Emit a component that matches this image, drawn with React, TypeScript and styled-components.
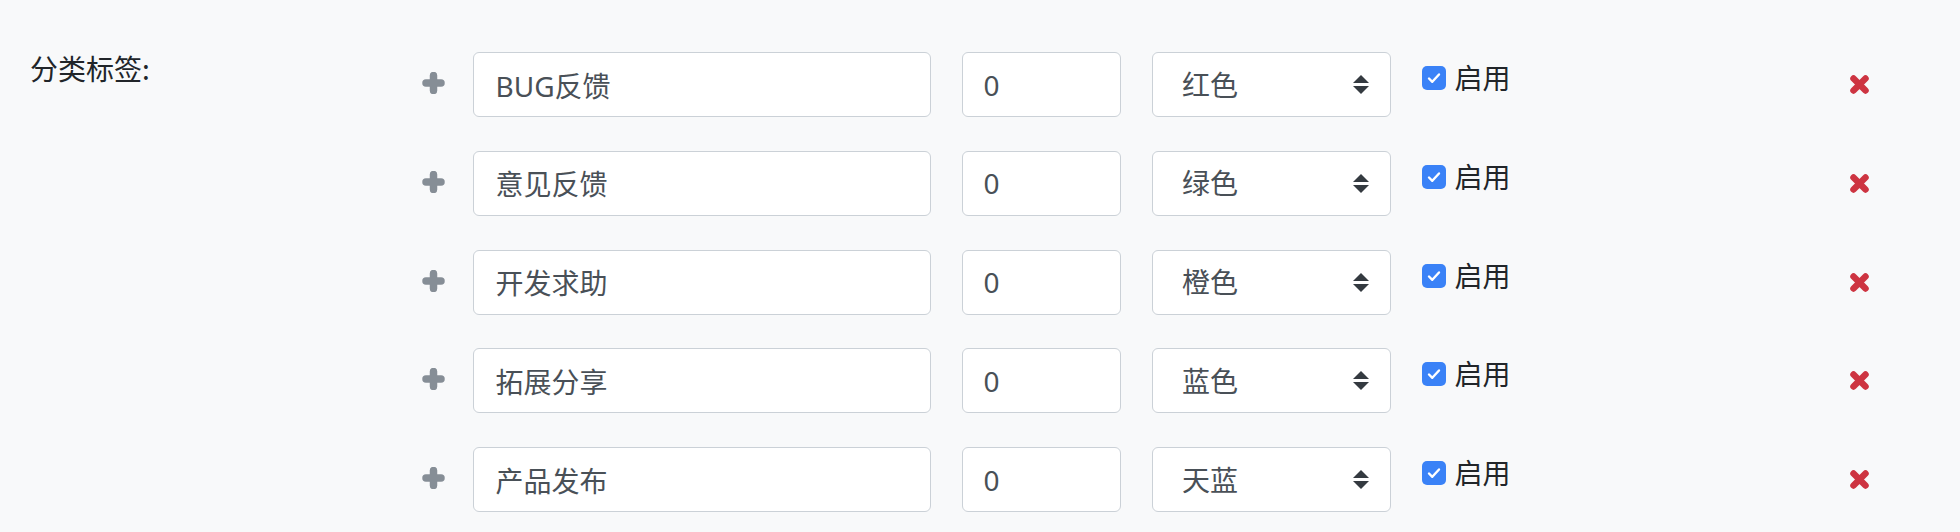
import React from "react";
import styled, { createGlobalStyle } from "styled-components";

const GlobalStyle = createGlobalStyle`
  html, body {
    margin: 0;
    padding: 0;
    background: #f8f9fa;
    font-family: "Noto Sans", "Noto Sans CJK SC", sans-serif;
  }
  * { box-sizing: border-box; }
`;

const Page = styled.div`
  width: 1960px;
  height: 532px;
  display: flex;
  padding: 52px 0 0 30px;
  background: #f8f9fa;
  overflow: hidden;
`;

const FieldLabel = styled.div`
  width: 392px;
  flex: none;
  font-size: 28px;
  line-height: 32px;
  color: #212529;
  font-family: "Noto Sans CJK SC", sans-serif;
`;

const Rows = styled.div`
  display: flex;
  flex-direction: column;
  gap: 33.75px;
  flex: 1;
`;

const Row = styled.div`
  display: flex;
  align-items: center;
  height: 65px;
`;

const AddButton = styled.button`
  width: 23px;
  height: 22px;
  padding: 0;
  border: 0;
  background: none;
  display: flex;
  flex: none;
  cursor: pointer;
  margin-top: -3px;
`;

const fieldBase = `
  height: 65px;
  flex: none;
  border: 1.6px solid #cbd1d7;
  border-radius: 6px;
  background: #fff;
  font-size: 28px;
  color: #495057;
  font-family: "Noto Sans", "Noto Sans CJK SC", sans-serif;
  outline: none;
`;

const NameInput = styled.input`
  ${fieldBase}
  width: 458px;
  margin-left: 27.5px;
  padding: 0 22px;
`;

const SortInput = styled.input`
  ${fieldBase}
  width: 159px;
  margin-left: 31px;
  padding: 0 21px;
`;

const SelectWrap = styled.div`
  position: relative;
  flex: none;
  width: 238.5px;
  height: 65px;
  margin-left: 31.5px;
`;

const ColorSelect = styled.select`
  ${fieldBase}
  width: 100%;
  padding: 0 50px 0 29px;
  appearance: none;
  -webkit-appearance: none;
`;

const SelectArrows = styled.svg`
  position: absolute;
  right: 22px;
  top: 23px;
  pointer-events: none;
`;

const EnableLabel = styled.label`
  display: flex;
  align-items: flex-start;
  gap: 9px;
  margin-left: 31px;
  align-self: flex-start;
  margin-top: 9px;
  font-size: 28px;
  line-height: 32px;
  color: #212529;
  font-family: "Noto Sans CJK SC", sans-serif;
  cursor: pointer;
`;

const CheckBox = styled.span<{ $checked: boolean }>`
  width: 24px;
  height: 24px;
  border-radius: 5px;
  background: ${(p) => (p.$checked ? "#3a82f7" : "#fff")};
  border: ${(p) => (p.$checked ? "none" : "1.5px solid #adb5bd")};
  display: flex;
  align-items: center;
  justify-content: center;
  flex: none;
  margin-top: 5px;
`;

const RemoveButton = styled.button`
  margin-left: auto;
  margin-right: 91px;
  width: 19px;
  height: 19px;
  padding: 0;
  border: 0;
  background: none;
  display: flex;
  flex: none;
  cursor: pointer;
`;

const tags = [
  { name: "BUG反馈", color: "红色" },
  { name: "意见反馈", color: "绿色" },
  { name: "开发求助", color: "橙色" },
  { name: "拓展分享", color: "蓝色" },
  { name: "产品发布", color: "天蓝" },
];

const colorOptions = ["红色", "绿色", "橙色", "蓝色", "天蓝"];

function PlusIcon() {
  return (
    <svg width="23" height="22" viewBox="0 0 23 22">
      <path d="M11.5 3.5v15M4 11h15" stroke="#868e96" strokeWidth="7.5" strokeLinecap="round" />
    </svg>
  );
}

function CrossIcon() {
  return (
    <svg width="19" height="19" viewBox="0 0 19 19">
      <path d="M3.5 3.5l12 12M15.5 3.5l-12 12" stroke="#cd3441" strokeWidth="6.5" strokeLinecap="round" />
    </svg>
  );
}

function Arrows() {
  return (
    <SelectArrows width="16" height="19" viewBox="0 0 16 19">
      <path d="M8 0L16 8H0Z" fill="#343a40" />
      <path d="M8 19L0 11H16Z" fill="#343a40" />
    </SelectArrows>
  );
}

function Check() {
  return (
    <svg width="16" height="16" viewBox="0 0 16 16">
      <path d="M3 8.5l3.3 3.3L13 4.5" fill="none" stroke="#fff" strokeWidth="2.4" strokeLinecap="round" strokeLinejoin="round" />
    </svg>
  );
}

export default function App() {
  return (
    <>
      <GlobalStyle />
      <Page>
        <FieldLabel>分类标签:</FieldLabel>
        <Rows>
          {tags.map((t) => (
            <Row key={t.name}>
              <AddButton type="button" aria-label="添加">
                <PlusIcon />
              </AddButton>
              <NameInput defaultValue={t.name} />
              <SortInput defaultValue="0" />
              <SelectWrap>
                <ColorSelect defaultValue={t.color}>
                  {colorOptions.map((c) => (
                    <option key={c} value={c}>
                      {c}
                    </option>
                  ))}
                </ColorSelect>
                <Arrows />
              </SelectWrap>
              <EnableLabel>
                <CheckBox $checked>
                  <Check />
                </CheckBox>
                启用
              </EnableLabel>
              <RemoveButton type="button" aria-label="删除">
                <CrossIcon />
              </RemoveButton>
            </Row>
          ))}
        </Rows>
      </Page>
    </>
  );
}
